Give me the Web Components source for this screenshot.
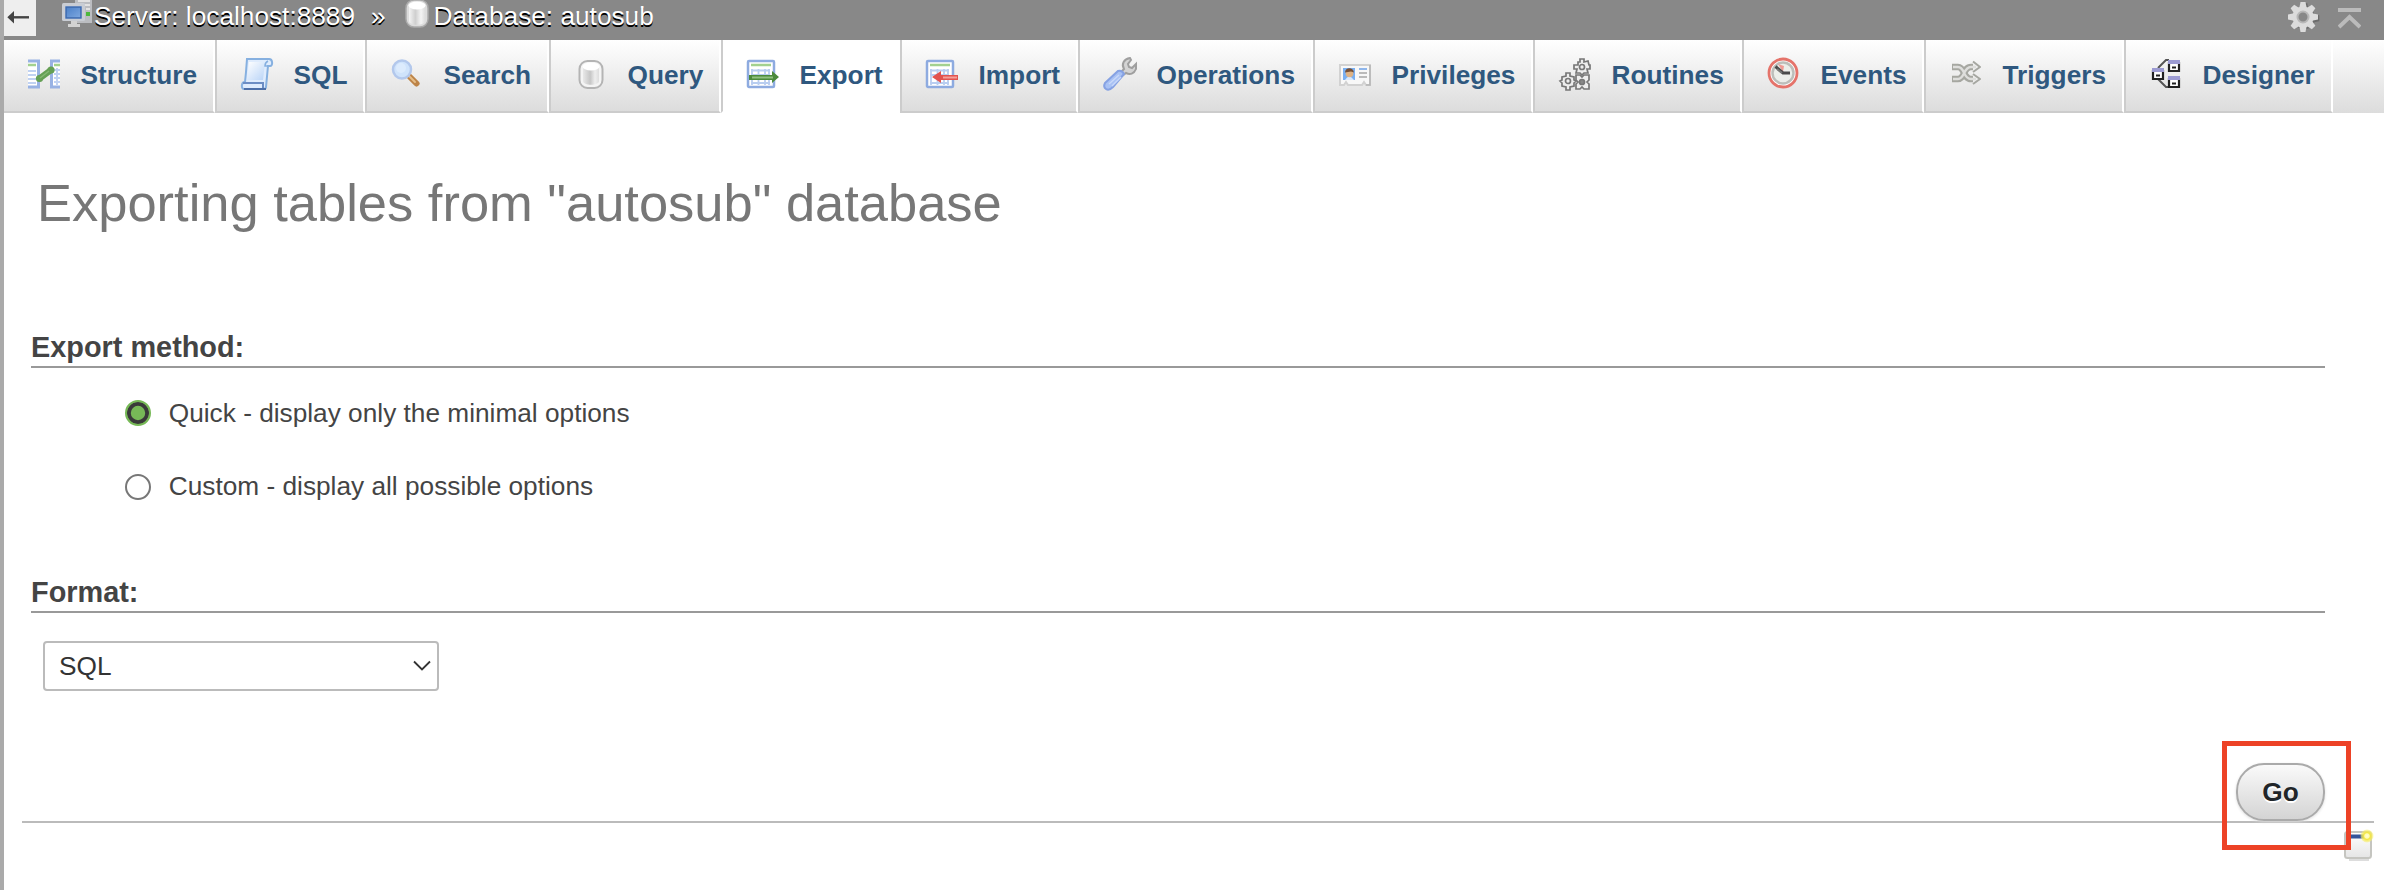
<!DOCTYPE html>
<html lang="en">
<head>
<meta charset="utf-8">
<title>Export: autosub</title>
<style>
html,body{margin:0;height:100%;background:#fff}
body{font-family:"Liberation Sans",Arial,sans-serif;font-size:26.24px;color:#444;overflow:hidden}
</style>
</head>
<body>
<pma-app></pma-app>
<script>
const ICONS = {
server:`<defs><linearGradient id="a" x2="1" y2="1"><stop stop-color="#4a7fc8"/><stop offset="1" stop-color="#7fa9e0"/></linearGradient></defs><path d="M13-1h17v24H13z" fill="#bbbdc1"/><path d="M16 1h12M20 5h8M24 9h4" stroke="#e2e2e2" stroke-width="2"/><rect x="24" y="12" width="4" height="4" fill="#4db83c"/><rect x="0" y="3" width="23" height="18" rx="1.500" fill="#c9cdd4"/><path d="M3 6h17v13H3z" fill="#dde3ec"/><rect x="4" y="7" width="15" height="11" fill="url(#a)" stroke="#3d69ad" stroke-width="1.500"/><path d="M9 21h6v3h3v3H6v-3h3z" fill="#d2d2d2"/>`,
db:`<defs><linearGradient id="a"><stop stop-color="#e8e8e8"/><stop offset=".3" stop-color="#d2d2d2"/><stop offset=".45" stop-color="#c6c6c6"/><stop offset=".75" stop-color="#eee"/><stop offset="1" stop-color="#ddd"/></linearGradient></defs><rect x="4.500" y="3" width="23" height="27" rx="8" fill="#f4f4f4" stroke="#b4b4b4" stroke-width="2"/><path d="M8 9v14c0 5 16 5 16 0V9z" fill="url(#a)"/><ellipse cx="16" cy="8.500" rx="8.500" ry="4" fill="#fff"/>`,
dbtop:`<defs><linearGradient id="a"><stop stop-color="#f4f4f4"/><stop offset=".4" stop-color="#cfcfcf"/><stop offset=".75" stop-color="#f4f4f4"/><stop offset="1" stop-color="#ddd"/></linearGradient></defs><rect x="4" y="0" width="22" height="27" rx="8" fill="#dcdcdc" stroke="#aaa" stroke-width="1.500"/><path d="M7 6v15c0 5 16 5 16 0V6z" fill="url(#a)"/><ellipse cx="15" cy="5.500" rx="8.500" ry="4" fill="#fff"/>`,
structure:`<path d="M0 3h11v26H0zM23 3h9v26h-9z" fill="#fff"/><path d="M0 3h10.500v26H0M32 3h-8.500v26H32" fill="none" stroke="#98b2e4" stroke-width="3"/><path d="M0 7h8M26 7h6" stroke="#a3d18f" stroke-width="2.500"/><path d="M0 13h8M0 17h8M0 21h8M0 25h8M26 12h6M26 16h6M26 20h6M26 24h6M29 10v17" stroke="#c0d2f2" stroke-width="2"/><path d="M11.500 20.500L23 12" stroke="#65a055" stroke-width="6" stroke-linecap="round"/><circle cx="11.500" cy="20.500" r="3.600" fill="#65a055"/><circle cx="23" cy="12" r="3.600" fill="#65a055"/><path d="M12 20l9-7" stroke="#86b874" stroke-width="1.500"/>`,
sql:`<defs><linearGradient id="a" x2="1" y2="1"><stop stop-color="#fff"/><stop offset="1" stop-color="#b9d4f7"/></linearGradient></defs><path d="M6 1h22c4 0 4 7 1 7h-2l-2 21c0 2-2 2-3 2H3c-3 0-3-7 1-7l1-10z" fill="#dfecfd" stroke="#86b0e0" stroke-width="2"/><path d="M8 4h16l-2 18H6z" fill="url(#a)"/><path d="M2 25h20v5" fill="none" stroke="#6c8dc4" stroke-width="2"/><path d="M3 31h22" stroke="#4d6fa8" stroke-width="2"/><path d="M27 3c-2 1-3 2-3 5h5" fill="none" stroke="#86b0e0" stroke-width="1.500"/>`,
search:`<path d="M19 19l6.500 6.500" stroke="#bd8448" stroke-width="6" stroke-linecap="round"/><path d="M18 18l6 6" stroke="#e5bd87" stroke-width="2" stroke-linecap="round"/><circle cx="11" cy="11.500" r="9" fill="#cfe3fb" stroke="#b3c8ec" stroke-width="2.500"/><circle cx="10" cy="10" r="5" fill="#dcebfd"/>`,
sheet:`<rect x="1" y="3" width="26" height="26" rx="1" fill="#fff" stroke="#8eabe0" stroke-width="2.500"/><path d="M4 7h20" stroke="#a3d18f" stroke-width="2.500"/><path d="M4 12.500h19M4 17h19M4 25h19M5 11v16M11.500 11v16M18 11v16M22 11v16" stroke="#b8cdf0" stroke-width="1.800"/>`,
wrench:`<path d="M17 14l3-3c-3-5 0-10 6-11l1 2-3 4 1 3 3 1 4-4v5c-2 5-6 6-10 4l-4 3z" fill="#d4d4d4" stroke="#9f9f9f" stroke-width="2"/><path d="M1 25L14 13q4-1 6 3L9 29q-4 4-7 2T1 25z" fill="#a9c2f4" stroke="#86a2e3" stroke-width="2"/><path d="M5 26l10-9M8 28l9-9" stroke="#c8d8f9" stroke-width="1.500"/>`,
privileges:`<path d="M1 7h30v20h-4l-2-3-2 3H9l-2-3-2 3H1z" fill="#f8f8f8" stroke="#d2d2d2" stroke-width="2"/><path d="M31 7v20h-4" fill="none" stroke="#b5b5b5" stroke-width="1.500"/><rect x="4" y="10" width="12" height="12" fill="#79aff1"/><path d="M6 22q4-7 9 0" fill="#d9e8fb"/><circle cx="10.500" cy="15.500" r="3.800" fill="#deb284"/><path d="M6 14.500c0-5 8-6 9 0l-3-1z" fill="#775137"/><path d="M20 11h8" stroke="#8fb6eb" stroke-width="2"/><path d="M20 15h8M20 19h8" stroke="#bbb" stroke-width="2"/>`,
routines:`<g fill="#ededed" stroke="#777" stroke-width="1.700"><path d="M21 1h4v3l4-1 1 4 1 0v4h-3l1 4h-4l-2 2-2-2h-4l1-4h-3V7h4V4l2 0z"/><path d="M7 15h4v3l4 1v3l2 1-2 2v3l-4 1v3H7v-3l-4-1v-3l-2-2 2-1v-3l4-1z"/><path d="M17 17h4l2 2 2-2h5v5l-2 2 2 2v5h-5l-2-2-2 2h-4v-5l2-2-2-2z"/><circle cx="23" cy="9" r="2.500"/><circle cx="9" cy="23" r="2.500"/><circle cx="23" cy="24" r="2.500" fill="#888"/></g>`,
events:`<circle cx="15" cy="15" r="14" fill="#fff" stroke="#e5736a" stroke-width="2.800"/><circle cx="15" cy="15" r="10.500" fill="#eceeea" stroke="#bdbeba" stroke-width="2.500"/><path d="M15 14L10 6l6 2z" fill="#ef9a94"/><path d="M7.500 8.500l7.500 6.500h7" fill="none" stroke="#4a4a4a" stroke-width="3"/><path d="M9 11l5 4" stroke="#777" stroke-width="2"/>`,
triggers:`<g fill="none" stroke-linejoin="round"><path d="M2 9h6c7 0 5 12 13 12h5M2 21h6c7 0 5-12 13-12h5" stroke="#a6a7a1" stroke-width="6.500"/><path d="M23 3.500l7 5.500-7 5M23 16l7 5-7 5" fill="#eee" stroke="#a6a7a1" stroke-width="2"/><path d="M3 9h5c7 0 5 12 13 12h5M3 21h5c7 0 5-12 13-12h5" stroke="#dededc" stroke-width="2.300"/></g>`,
designer:`<path d="M8 10L16 2h3M8 21l8 8h3" fill="none" stroke="#555" stroke-width="2"/><g fill="#fff" stroke="#222" stroke-width="2.200"><path d="M19 5h10v8H19zM3 13h10v8H3zM19 21h10v8H19z"/></g><path d="M18 2h12v4H18zM2 10h12v4H2zM18 18h12v4H18z" fill="#9c9bd2"/><path d="M22 9.500h4M6 17.500h4M22 25.500h4" stroke="#222" stroke-width="2"/>`,
gear:`<g transform="translate(16 16)"><g fill="#555" opacity=".55" transform="translate(1.300 1.300)"><circle r="11"/><path d="M-3-15h6l1 5h-8z"/><path d="M-3-15h6l1 5h-8z" transform="rotate(90)"/></g><g fill="#dcdcdc"><circle r="10.500"/>${[0,45,90,135,180,225,270,315].map(a=>`<path d="M-2.500-15h5l1.200 6h-7.400z" transform="rotate(${a})"/>`).join('')}</g><circle r="5.500" fill="#888" stroke="#b8b8b8" stroke-width="2"/></g>`,
console:`<defs><linearGradient id="a" x2="0" y2="1"><stop stop-color="#fff"/><stop offset="1" stop-color="#e5e5e5"/></linearGradient><radialGradient id="b"><stop stop-color="#ffffd8"/><stop offset=".35" stop-color="#fffbb0"/><stop offset=".5" stop-color="#f3e63b"/><stop offset="1" stop-color="#f8f07a" stop-opacity=".5"/></radialGradient></defs><path d="M5 31h20" stroke="#ddd" stroke-width="2"/><rect x="1" y="3" width="26" height="26" rx="2.500" fill="url(#a)" stroke="#c5c5c0" stroke-width="2"/><path d="M4 7.500h16" stroke="#34549a" stroke-width="4"/><circle cx="23" cy="7" r="6.500" fill="url(#b)"/>`
};
ICONS.query = ICONS.db;
ICONS.export = ICONS.sheet + `<path d="M2 17h23v-4l7 6-7 6v-3H2z" fill="#4b8a3b"/><path d="M5 19.500h21" stroke="#8fc07f" stroke-width="2"/>`;
ICONS.import = ICONS.sheet + `<path d="M32 17H15v-4l-9 6 9 6v-3h17z" fill="#e2534f"/><path d="M17 19.500h14" stroke="#f4a09b" stroke-width="2"/>`;

function define(name, html){
  customElements.define(name, class extends HTMLElement{
    constructor(){
      super();
      const t = document.createElement('template');
      t.innerHTML = typeof html === 'function' ? html(this) : html;
      this.attachShadow({mode:'open'}).append(t.content.cloneNode(true));
    }
  });
}

define('pma-icon', el => `<style>:host{display:block;flex:none;width:32px;height:32px}svg{display:block;overflow:visible;filter:blur(.5px)}</style><svg width="32" height="32" viewBox="0 0 32 32">${ICONS[el.getAttribute('name')]}</svg>`);

define('pma-tab', `<style>
:host{display:flex;box-sizing:border-box;flex:none;height:73px;padding:18px 0 0 24px;gap:20.500px;
 border-left:2px solid #ccc;border-right:2px solid #fff;border-bottom:2px solid #ccc;
 background:linear-gradient(#fff,#dcdcdc) padding-box;font-weight:bold;color:#2f587f;white-space:nowrap}
:host([first]){border-left:0}
:host([active]){background:#fff;border-right:0;border-bottom-color:#fff}
span{line-height:30px;margin-top:2px}
</style><slot name="icon"></slot><span><slot></slot></span>`);

define('pma-tabs', `<style>
:host{display:flex;height:73px;background:linear-gradient(#fff,#dcdcdc)}
</style><slot></slot>`);

define('pma-crumbs', `<style>
:host{display:flex;height:40px;background:#888;color:#fff;text-shadow:0 2px 0 #000}
.back{width:32px;height:36px;background:#eee;margin-right:26px}
.text{line-height:30px;margin-top:1px;white-space:nowrap}
.sep{width:58px;padding-left:16px;box-sizing:border-box;margin-right:-11.500px}
.end{margin-left:auto;display:flex;padding:1px 23px 0 0;gap:19px}
</style>
<svg class="back" width="32" height="36" viewBox="0 0 32 36"><path d="M9 17.300h16" stroke="#444" stroke-width="2.400"/><path d="M3.300 17.300L10 11v12.600z" fill="#444"/></svg>
<pma-icon name="server"></pma-icon><span class="text">Server: localhost:8889</span>
<span class="text sep">»</span>
<pma-icon name="dbtop"></pma-icon><span class="text">Database: autosub</span>
<div class="end"><pma-icon name="gear"></pma-icon>
<svg width="23" height="30" viewBox="0 0 23 30"><path d="M0 9h23" stroke="#bbb" stroke-width="4"/><path d="M1 26l10.500-10L22 26" fill="none" stroke="#bbb" stroke-width="4"/></svg></div>`);

define('pma-section', `<style>
:host{display:block}
h3{margin:0;font-size:28.860px;line-height:38px;height:38px;border-bottom:2px solid #999;color:#444}
</style><h3><slot name="title"></slot></h3><slot></slot>`);

define('pma-radio', `<style>
:host{display:flex;align-items:center;height:30px;padding-left:94px;gap:17.800px}
i{box-sizing:border-box;width:26px;height:26px;border-radius:50%;border:2px solid #777;background:#fff}
:host([checked]) i{border:2px solid #77b957;background:#77b957;box-shadow:inset 0 0 0 3.800px #3a3a3a}
:host(:not([checked])) span{margin-top:-2px}
</style><i></i><span><slot></slot></span>`);

define('pma-select', `<style>
:host{display:flex;align-items:center;justify-content:space-between;box-sizing:border-box;width:396px;height:50px;border:2px solid #bbb;border-radius:4px;padding:0 6px 0 14px;color:#333}
</style><span><slot></slot></span><svg width="18" height="12" viewBox="0 0 18 12"><path d="M1 1.500l8 8 8-8" fill="none" stroke="#333" stroke-width="1.800"/></svg>`);

define('pma-button', `<style>
:host{display:flex;align-items:center;justify-content:center;box-sizing:border-box;width:89px;height:58px;border:2px solid #aaa;border-radius:28px;background:linear-gradient(#fafafa,#d4d4d4);font-weight:bold;color:#212529;text-shadow:0 2px 0 #fff;box-shadow:0 1px 3px #ddd}
</style><span><slot></slot></span>`);

define('pma-app', `<style>
:host{display:block;box-sizing:border-box;height:890px;border-left:4px solid #aaa;position:relative}
h2{margin:60px 0 0 33px;font-size:52.480px;font-weight:normal;line-height:60px;color:#777;white-space:nowrap}
pma-section{margin:0 59px 0 27px}
.m{margin-top:95px}.f{margin-top:71px}
.r1{margin-top:30px}.r2{margin-top:44px}
pma-select{margin:28px 0 0 12px}
footer{display:flex;justify-content:flex-end;margin:72px 10px 0 18px;padding-right:49px;border-bottom:2px solid #bbb}
.mark{position:absolute;left:2218px;top:741px;width:129px;height:109px;box-sizing:border-box;border:5px solid #ed4226}
.console{position:absolute;right:8px;top:829px}
</style>
<pma-crumbs></pma-crumbs>
<pma-tabs>${[['Structure',211],['SQL',150],['Search',184],['Query',172],['Export',179],['Import',178],['Operations',235],['Privileges',220],['Routines',209],['Events',182],['Triggers',200],['Designer',209]].map(([n,w])=>`<pma-tab style="width:${w}px"${n==='Structure'?' first':''}${n==='Export'?' active':''}><pma-icon slot="icon" name="${({Operations:'wrench'})[n]||n.toLowerCase()}"></pma-icon>${n}</pma-tab>`).join('')}</pma-tabs>
<h2>Exporting tables from "autosub" database</h2>
<pma-section class="m"><span slot="title">Export method:</span>
<pma-radio class="r1" checked>Quick - display only the minimal options</pma-radio>
<pma-radio class="r2">Custom - display all possible options</pma-radio></pma-section>
<pma-section class="f"><span slot="title">Format:</span><pma-select>SQL</pma-select></pma-section>
<footer><pma-button>Go</pma-button></footer>
<pma-icon class="console" name="console"></pma-icon>
<div class="mark"></div>`);
</script>
</body>
</html>
